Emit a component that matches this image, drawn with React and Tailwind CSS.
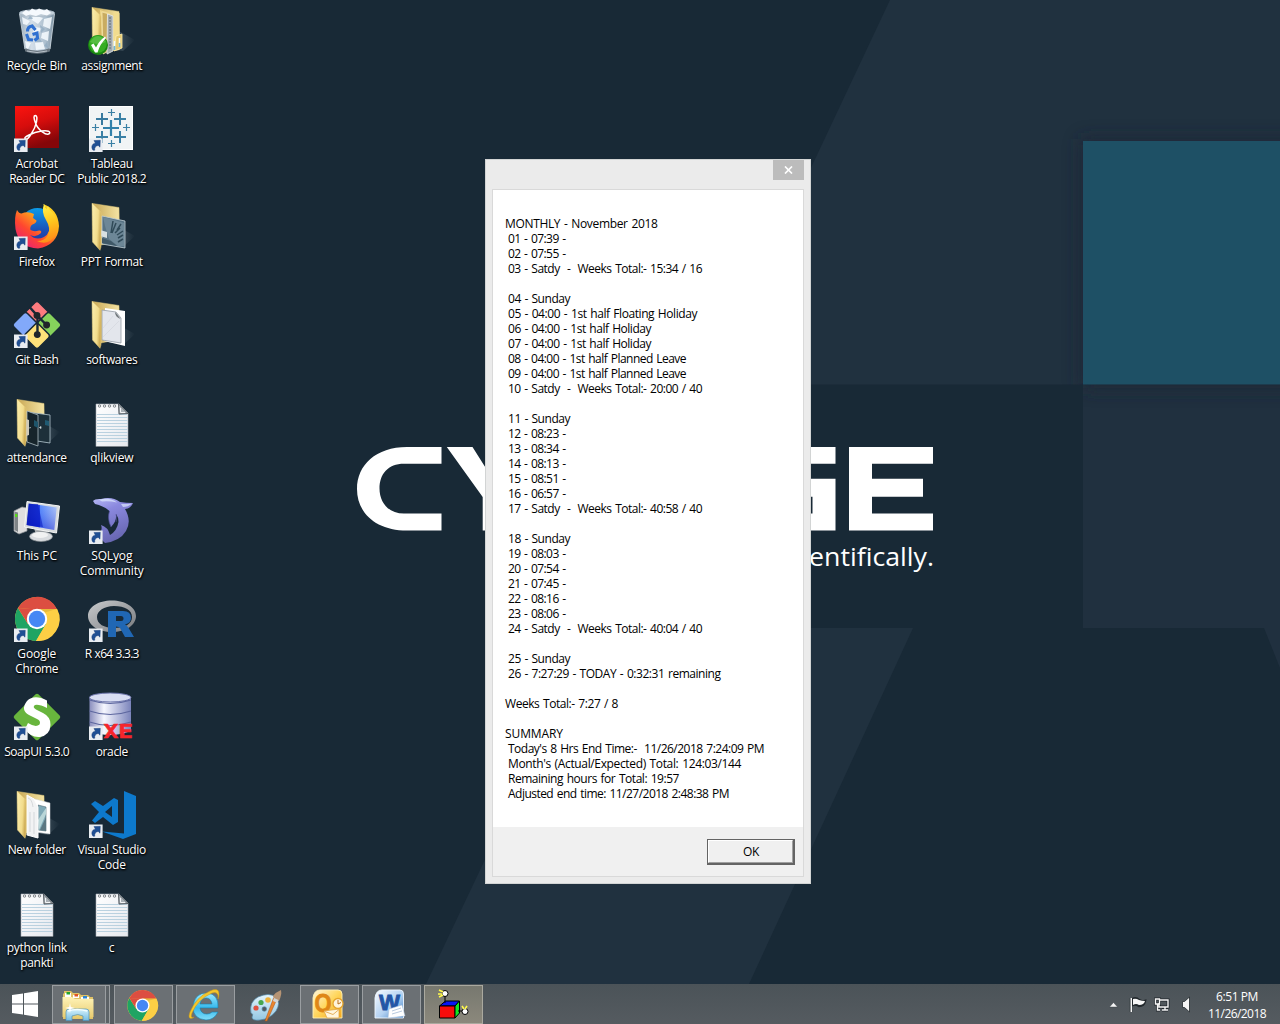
import React, { useLayoutEffect, useRef, useState } from "react";

/* Text whose letter spacing is tuned so that it spans a given width. */
function Fit({ w, children, className = "" }) {
  const ref = useRef(null);
  const [spacing, setSpacing] = useState(0);
  useLayoutEffect(() => {
    const el = ref.current;
    const natural = el.getBoundingClientRect().width;
    setSpacing((w - natural) / children.length);
  }, [w, children]);
  return (
    <span ref={ref} className={"inline-block whitespace-pre " + className} style={{ letterSpacing: spacing + "px" }}>
      {children}
    </span>
  );
}

function Wallpaper() {
  return (
    <svg className="absolute inset-0" width="1280" height="1024" viewBox="0 0 1280 1024">
      <defs>
        <filter id="soft" x="-30%" y="-30%" width="160%" height="160%">
          <feGaussianBlur stdDeviation="9" />
        </filter>
        <clipPath id="upper"><rect x="0" y="0" width="1280" height="385" /></clipPath>
        <clipPath id="lower"><rect x="1083" y="384" width="197" height="60" /></clipPath>
      </defs>
      <rect width="1280" height="1024" fill="#182936" />
      <path d="M890 0H1280V384.5H709Z" fill="#20313f" />
      <path d="M595 628H913L749 984H426Z" fill="#20313f" />
      <path d="M1083 384H1280V668L1264 628H1083Z" fill="#20303f" />
      <g clipPath="url(#upper)"><rect x="1081" y="139" width="230" height="250" fill="#1c2436" opacity=".7" filter="url(#soft)" /></g>
      <g clipPath="url(#lower)"><rect x="1083" y="150" width="220" height="238" fill="#1c2535" opacity=".8" filter="url(#soft)" /></g>
      <rect x="1083" y="141" width="197" height="243.500" fill="#1e5065" />
      <g fill="#fff">
        <path d="M441.500 447H407C376 447 357 465 357 489C357 513 376 530.600 407 530.600H441.500V513.600H404C388 513.600 379.500 502 379.500 488.500C379.500 474 388 463.700 404 463.700H441.500Z" />
        <path d="M446.800 447H472.500L494 481L515 447H541L506 497V530.600H482.700V497Z" />
        <path d="M790 447H835.500V463.700H790Z M790 478.700H835.500V530.600H790V513.600H812.500V496.700H790Z" />
        <path d="M849 447H933V463.700H872V478.700H923V496.700H872V513.600H933V530.600H849Z" />
      </g>
      <text x="809" y="566" textLength="125" lengthAdjust="spacingAndGlyphs" fill="#fff" fontSize="25" fontFamily="Open Sans, sans-serif">entifically.</text>
    </svg>
  );
}

function Shortcut() {
  return (
    <g>
      <rect x="14" y="40.500" width="13.600" height="13.500" fill="#e9edf2" />
      <path d="M18 52.200C15.800 49.500 16.800 45.600 20.400 44.900L18.900 42.600L25.300 42.300L25 49.200L23.200 47.400C20.800 48 19.200 49.500 19.800 52.200Z" fill="#1f4f94" stroke="#173b74" strokeWidth=".4" />
    </g>
  );
}

function RecycleIcon() {
  return (
    <g>
      <defs>
        <linearGradient id="bin" x1="0" x2="1"><stop stopColor="#a3b5c4" /><stop offset=".35" stopColor="#dde8f2" /><stop offset=".75" stopColor="#b3c6d6" /><stop offset="1" stopColor="#7f95a6" /></linearGradient>
      </defs>
      <path d="M19.500 13L25 50Q37 56 50 50L54.500 13Z" fill="url(#bin)" opacity=".95" />
      <path d="M22 17L30 21L27 25L23 24ZM33 15L43 18L38 24L32 20ZM44 19L52 17L50 29L43 26ZM34 27L42 28L38 34L33 32ZM42 33L49 31L48 41L41 38ZM25 41L31 43L28 49L26 48ZM35 43L43 42L45 49L36 50Z" fill="#f7fbff" opacity=".85" />
      <path d="M28 26L33 24L35 29ZM40 25L45 29L41 33ZM38 36L42 42L36 42ZM47 42L44 46L48 48ZM30 15L33 19L28 19Z" fill="#8ea9c0" opacity=".7" />
      <ellipse cx="37" cy="13" rx="17.700" ry="3.300" fill="#c3d0db" stroke="#aab9c5" strokeWidth=".9" />
      <path d="M22 13L26 10L29 11.500L32 8.500L36 10.500L39 8.500L44 10.500L47 9L51 13L47 15.500L41 14L36 16L30 14.500L26 16Z" fill="#f5f9fd" />
      <g fill="none" stroke="#2f70d1" strokeWidth="3.100">
        <path d="M27.500 31.500Q27.500 26.500 32 26L35.500 30" />
        <path d="M26.500 34L28.500 39.500L33 40" />
        <path d="M32.500 34.500L37 33L37.500 38L34.500 40.500" />
      </g>
      <path d="M24.600 48Q37 53.500 50.300 48L49.800 51.500Q37 56 25.200 51.500Z" fill="#68747e" />
      <path d="M27 51Q37 54 47 51" stroke="#b8c2ca" fill="none" />
      <path d="M19.500 14L24.900 49M54.500 14L50 49" stroke="#d5dfe7" strokeWidth=".8" fill="none" />
    </g>
  );
}

/* An open folder; children draw what sticks out of it. */
function Folder({ children }) {
  return (
    <g>
      <defs>
        <linearGradient id="fback" x1="0" x2="1"><stop stopColor="#c9a855" /><stop offset="1" stopColor="#f4e4a4" /></linearGradient>
        <linearGradient id="ffront" x1="0" x2="1" y2=".3"><stop stopColor="#fbeeae" /><stop offset=".7" stopColor="#f2dc8c" /><stop offset="1" stopColor="#cfae58" /></linearGradient>
        <linearGradient id="fshade" x1="0" x2="1"><stop stopColor="#8fa1ab" stopOpacity=".6" /><stop offset="1" stopColor="#8fa1ab" stopOpacity="0" /></linearGradient>
      </defs>
      <path d="M42 30L60 40L48 51L28 47Z" fill="url(#fshade)" />
      <path d="M17.500 7.500L44 11.500L44.500 45L26 49Z" fill="url(#fback)" stroke="#dfc678" strokeWidth=".5" />
      {children}
      <path d="M17 7.200L25 15Q26 16 26 18V51L25 54.300L17.500 46Z" fill="url(#ffront)" stroke="#e6cd7d" strokeWidth=".5" />
    </g>
  );
}

function AssignmentIcon() {
  return (
    <g>
      <Folder>
        <path d="M25 10L35 13V50L28 54Z" fill="#eed78b" />
        <path d="M27 12L34 14V51L28 54Z" fill="#c9ac60" stroke="#f7e7ae" strokeWidth=".7" />
        <path d="M32.500 14L38 16V51L32 54Z" fill="#a4abb0" stroke="#e9edef" strokeWidth=".8" />
        <path d="M35 17V50" stroke="#5d6b74" strokeDasharray="2 1" />
        <path d="M38.500 12L44.500 13V50L38.500 51Z" fill="#f2dc8e" />
        <path d="M41 36L47 34V48L39 51Z" fill="#e5c96f" stroke="#ffefad" strokeWidth=".8" />
        <path d="M39.500 41V50M44.500 38V47" stroke="#f1fbff" strokeWidth="1.600" />
        <path d="M39.500 46V50M44.500 43V47" stroke="#71b8d8" strokeWidth="1.600" />
      </Folder>
      <circle cx="23" cy="45" r="10" fill="#19870f" />
      <circle cx="23" cy="44" r="8.800" fill="#35ad23" />
      <path d="M15 42Q23 30 31 42Q23 46 15 42Z" fill="#78ce61" opacity=".5" />
      <path d="M16 45L18.500 43.500L21 47.500Q24 41 30 36.500L31 38Q25 44 22.500 52.500L20 52.500Z" fill="#fff" />
    </g>
  );
}

function AcrobatIcon() {
  return (
    <g>
      <defs><linearGradient id="acro" x1="0" y1="0" x2=".35" y2="1"><stop stopColor="#fc1410" /><stop offset=".5" stopColor="#d60d0c" /><stop offset="1" stopColor="#850609" /></linearGradient></defs>
      <rect x="15" y="8" width="44" height="42" fill="url(#acro)" />
      <path d="M25.500 41C22 39.500 33 34.500 41.500 33C48 31.800 51 34 49.300 35.700C46.500 38 38 32.300 35.500 25C33.500 19.500 33.500 17.500 35.500 17.500C38.500 18 36.500 28 31.500 35.500C29 39.500 27 42 25.500 41Z" fill="none" stroke="#fff" strokeWidth="1.500" />
      <Shortcut />
    </g>
  );
}

function Plus({ x, y, r, w, c = "#3a80a5" }) {
  return <path d={"M" + (x - r) + " " + y + "H" + (x + r) + "M" + x + " " + (y - r) + "V" + (y + r)} stroke={c} strokeWidth={w} />;
}

function TableauIcon() {
  return (
    <g>
      <rect x="14" y="8" width="44" height="44" fill="#f1f4f5" />
      <rect x="14.500" y="8.500" width="43" height="43" fill="none" stroke="#fff" />
      <Plus x={36} y={30} r={8} w={2.2} c="#3281aa" />
      <Plus x={27} y={21} r={6} w={2} c="#397a9f" />
      <Plus x={45} y={21} r={6} w={2} />
      <Plus x={27} y={39} r={6} w={2} />
      <Plus x={45} y={39} r={6} w={2} />
      <Plus x={36.500} y={14.500} r={3.500} w={1.200} />
      <Plus x={36.500} y={45.500} r={3.500} w={1.200} />
      <Plus x={20.500} y={29.500} r={3.500} w={1.200} />
      <Plus x={51.500} y={29.500} r={3.500} w={1.200} />
      <Shortcut />
    </g>
  );
}

function FirefoxIcon() {
  return (
    <g>
      <defs>
        <linearGradient id="fx1" x1=".9" y1="0" x2=".1" y2="1"><stop stopColor="#ffe226" /><stop offset=".35" stopColor="#ffab18" /><stop offset=".65" stopColor="#ff472f" /><stop offset="1" stopColor="#e31587" /></linearGradient>
        <linearGradient id="fx2" x1=".5" y1="0" x2=".5" y2="1"><stop stopColor="#0c9be8" /><stop offset=".7" stopColor="#1c4bb4" /><stop offset="1" stopColor="#253b9e" /></linearGradient>
        <linearGradient id="fx3" x1=".4" y1="0" x2=".6" y2="1"><stop stopColor="#fff44e" /><stop offset=".5" stopColor="#ffc51d" /><stop offset="1" stopColor="#ff8a17" /></linearGradient>
      </defs>
      <circle cx="37.500" cy="29" r="17" fill="url(#fx2)" />
      <path d="M17 14Q19 17.500 21.500 17.500Q28 15 34 18L33 22L36.500 24.500Q36.500 27 32.500 28.500Q29.500 30.500 30.500 34Q34 36 39 34.500Q42 34 41 37Q36 42 30 39Q36 45 44 41Q51 37 50 26Q49 15 43 8Q58 13 59 30Q58 49 38 52.500Q19 52 15.500 33Q14 21 17 14Z" fill="url(#fx1)" />
      <path d="M44 8Q41 16 46 24Q51 32 48 39Q45 45 37 45Q48 50 55 40Q61 28 53 17Q49 14 48 10L46.500 13Z" fill="url(#fx3)" />
      <Shortcut />
    </g>
  );
}

function PptFolder() {
  return (
    <Folder>
      <path d="M27 20L50 25V52L27 48Z" fill="#587384" stroke="#c3d0d7" strokeWidth=".8" />
      <path d="M28 21L39 24L49 27V50L43 50L34 43L30 30Z" fill="#6d8797" />
      <path d="M38 25L36 37M41 27L37 37M45 32L40 37M46 28L42 34M42 39L48 35M43 42L48 39M43 46L48 43" stroke="#304a58" strokeWidth="1.500" fill="none" />
      <path d="M27 42L36 45L42 50L27 47Z" fill="#3f5867" />
      <path d="M25 34L32 36V42L25 40Z" fill="#d8e0e2" />
    </Folder>
  );
}

function SoftwareFolder() {
  return (
    <Folder>
      <path d="M30 14L50 17V52L29 47Z" fill="#fff" />
      <path d="M27 16L41 18L46 24V49L27 46Z" fill="#e3e6ec" stroke="#949ca4" strokeWidth=".8" />
      <path d="M40 18Q40 23 45.500 25L42 20Z" fill="#71777b" />
      <path d="M28 43L44 27M28 34L38 22" stroke="#d5d8df" strokeWidth=".8" />
    </Folder>
  );
}

function GitIcon() {
  return (
    <g transform="translate(37 31) scale(.96) translate(-37 -31)">
      <g stroke="#182936" strokeWidth="1.600">
        <rect x="27" y="9.500" width="20" height="20" rx="3" transform="rotate(45 37 19.500)" fill="#fc7b7f" />
        <rect x="15" y="21" width="20" height="20" rx="3" transform="rotate(45 25 31)" fill="#82a9fa" />
        <rect x="39" y="21" width="20" height="20" rx="3" transform="rotate(45 49 31)" fill="#86d25c" />
        <rect x="27" y="32.500" width="20" height="20" rx="3" transform="rotate(45 37 42.500)" fill="#ffe27a" />
      </g>
      <path d="M37.500 21V40M38 22L47 31M29 12L37 21" stroke="#182936" strokeWidth="2.500" fill="none" />
      <circle cx="37" cy="21" r="3.600" fill="#20252a" />
      <circle cx="47" cy="31" r="3.600" fill="#20252a" />
      <circle cx="37.300" cy="41" r="3.600" fill="#20252a" />
    </g>
  );
}

function AttendanceFolder() {
  return (
    <Folder>
      <path d="M27 20L50 23V51L37 49Z" fill="#1d303a" stroke="#b4c7cf" strokeWidth=".8" />
      <path d="M45 28L49 29V34L45 33Z" fill="#205b73" />
      <path d="M27 19L38 23V54L27 50Z" fill="#16242b" stroke="#acbcc3" strokeWidth=".8" />
      <path d="M34 28L38 30V36L34 34Z" fill="#1e556b" />
      <path d="M26 27L29 28V43L26 44Z" fill="#cfcaba" />
      <path d="M29 36L31 35.500M39.500 35.500L41 34.500V36.500Z" stroke="#c3ced2" strokeWidth=".8" fill="#fff" />
    </Folder>
  );
}

function NotepadIcon() {
  return (
    <g>
      <defs><linearGradient id="note" x1="0" y1="0" x2="1" y2="1"><stop stopColor="#fff" /><stop offset="1" stopColor="#e5e8ee" /></linearGradient></defs>
      <path d="M21.500 12.500H44L53.500 22V55.500H21.500Z" fill="#101c26" opacity=".6" />
      <path d="M21 12H44L53 21V54.500H21Z" fill="url(#note)" stroke="#a5adb5" strokeWidth=".6" />
      {[22.500, 25.500, 28.500, 31.500, 34.500, 37.500, 40.500, 43.500, 46.500, 49.500].map((y) => (
        <path key={y} d={"M22 " + y + "H52.500"} stroke="#b3cddc" strokeWidth=".9" />
      ))}
      <path d="M43.500 12L53 21.500L44 22Z" fill="#a9b0b6" stroke="#474e55" strokeWidth=".9" />
      <path d="M45.500 16V20.500H50" stroke="#f2f4f6" fill="none" />
      {[24.500, 29.500, 34.500, 39.500].map((x) => (
        <circle key={x} cx={x} cy="14" r="1.250" fill="#eee" stroke="#686e75" strokeWidth=".8" />
      ))}
      <path d="M21 54.500H53" stroke="#7d848b" />
    </g>
  );
}

function PcIcon() {
  return (
    <g>
      <defs>
        <linearGradient id="scr" x1="0" x2="1"><stop stopColor="#0715b1" /><stop offset=".43" stopColor="#1533e2" /><stop offset=".46" stopColor="#5d8efd" /><stop offset="1" stopColor="#c5d5f5" /></linearGradient>
        <linearGradient id="scrv" x1="0" x2="0" y2="1"><stop stopColor="#6495ff" stopOpacity=".2" /><stop offset="1" stopColor="#0610c7" stopOpacity=".45" /></linearGradient>
      </defs>
      <path d="M14 21L22 17L27 18V41L19 44L14 41Z" fill="#dedede" stroke="#8f9498" strokeWidth=".7" />
      <path d="M14.500 21.500L18 22.500V42L14.500 40Z" fill="#7f8487" />
      <path d="M16.200 24V27" stroke="#54de14" strokeWidth="2.200" />
      <path d="M34 38L48 39L47 45H36Z" fill="#aeb2b4" />
      <ellipse cx="41" cy="46.500" rx="11.500" ry="5" fill="#d9dcdf" stroke="#878d91" strokeWidth=".7" />
      <ellipse cx="40" cy="45" rx="8" ry="3" fill="#f1f2f2" />
      <path d="M27 11.500L59.500 16L56.500 43L24.500 37Z" fill="#d7dbdd" stroke="#f4f5f5" />
      <path d="M28.700 13.500L56.700 17.500L54.300 40L26.600 35Z" fill="url(#scr)" />
      <path d="M28.700 13.500L56.700 17.500L54.300 40L26.600 35Z" fill="url(#scrv)" />
      <path d="M29 14H38L43 37L27 35Z" fill="#0717bd" opacity=".55" />
    </g>
  );
}

function DolphinIcon() {
  return (
    <g>
      <defs><linearGradient id="dol" x1="0" y1="0" x2=".4" y2="1"><stop stopColor="#b6b9f4" /><stop offset=".35" stopColor="#8b89df" /><stop offset="1" stopColor="#6867b2" /></linearGradient></defs>
      <path d="M18 11Q20 8.500 26 9Q37 6 45 12Q51 13 58 13Q56 18.500 50 19Q57 31 51 41Q45 51 30 53L24 47Q28 39 26 35Q33 37 35 45Q42 41 43.500 32Q43.500 27 41 24Q42 31 36 37Q32 29 34.500 21Q29 16 20 14Z" fill="url(#dol)" />
      <path d="M24 9.800Q35 7 42 12.500Q33 10.500 27 11.500ZM46 14Q51 14 57 13.500Q53 17 48 17Z" fill="#e2eeff" opacity=".65" />
      <path d="M34.500 21Q32 29 36 37M41 24Q42.500 28 41 32" stroke="#4f4f96" strokeWidth=".7" fill="none" />
      <Shortcut />
    </g>
  );
}

function ChromeArt({ cx, cy, s }) {
  return (
    <g transform={"translate(" + cx + " " + cy + ") scale(" + s + ")"}>
      <circle r="22" fill="#fdcf45" />
      <path d="M-19.050 -11A22 22 0 0 1 20.200 -9.500H0Z" fill="#dc4e41" />
      <path d="M-19.050 -11A22 22 0 0 0 -1 22L9 5L-9 5Z" fill="#1fa463" />
      <path d="M0 -10H20.200A22 22 0 0 1 -1 22L9 5Z" fill="#fdcf45" />
      <path d="M-19.050 -11L0 -10L-9 5Z" fill="#dc4e41" />
      <path d="M0 -10H19.500L6 -6Z" fill="#be932c" opacity=".35" />
      <circle r="10.200" fill="#fff" />
      <circle r="8.200" fill="#4687f4" />
    </g>
  );
}

function RIcon() {
  return (
    <g>
      <defs><linearGradient id="rring" x1="0" y1="0" x2="1" y2="1"><stop stopColor="#c9cbcd" /><stop offset="1" stopColor="#77797d" /></linearGradient></defs>
      <path fillRule="evenodd" d="M37 12.500C50 12.500 61 19 61 28C61 37 51 44 37 44C23 44 13 37 13 28C13 19 23 12.500 37 12.500ZM39 18C29 18 22 23 22 29C22 36 29 40 39 40C50 40 57 36 57 29C57 22 50 18 39 18Z" fill="url(#rring)" />
      <path fillRule="evenodd" d="M33 23H48Q56 23 56 30Q56 35 50 36.500Q52 37.500 53 39L59 49H50L45 40Q44 38.500 41 38.500V49H33ZM41 28V33H46Q48.500 33 48.500 30.500Q48.500 28 46 28Z" fill="#2067b4" />
      <Shortcut />
    </g>
  );
}

function SoapIcon() {
  return (
    <g>
      <rect x="20" y="14" width="34" height="34" rx="2" transform="rotate(45 37 31)" fill="#68b53d" />
      <path d="M47 14.500Q34 8 27 15Q20 24 29 29L38 33.500Q41 35.500 39.500 38.500Q36 42 28 37L25 43Q31 52 40 51Q50 49 50.500 39Q51 31 43 27L36 23.500Q32 21 35 19Q39 18 47 22Z" fill="#fff" />
      <Shortcut />
    </g>
  );
}

function OracleIcon() {
  return (
    <g>
      <defs><linearGradient id="db" x1="0" x2="1"><stop stopColor="#8a8ebd" /><stop offset=".35" stopColor="#f6f7ff" /><stop offset="1" stopColor="#7b84bb" /></linearGradient></defs>
      <path d="M14.500 11V45Q35 53 56 45V11Z" fill="url(#db)" />
      <ellipse cx="35.200" cy="11.500" rx="20.700" ry="4.500" fill="#d9def3" stroke="#6b73aa" />
      <path d="M14.500 14Q35 21 56 14M14.500 25Q35 32 56 25M14.500 36Q35 43 56 36" fill="none" stroke="#5d679f" strokeWidth="1.200" />
      <text x="28.500" y="52" fontFamily="DejaVu Sans Mono" fontSize="20" fontWeight="bold" fill="#f6252b" stroke="#f6252b" strokeWidth=".5" textLength="29.500" lengthAdjust="spacingAndGlyphs">XE</text>
      <Shortcut />
    </g>
  );
}

function NewFolder() {
  return (
    <Folder>
      <path d="M31 14L50 19V50L36 48Z" fill="#fff" stroke="#d6dadc" strokeWidth=".5" />
      <path d="M38 21L46 23V47L38 46Z" fill="#7fa9b6" stroke="#536c76" strokeWidth=".6" />
      <path d="M38 36L46 24V30L39 46Z" fill="#b9d6d8" />
      <path d="M40 46L46 33V47Z" fill="#5c7781" />
      <path d="M27 11L34 15L38 23V54L27 51Z" fill="#f2f3f4" stroke="#fff" />
      <path d="M28 14Q32 15 33 23M30 28V48M34 28V50" stroke="#c9cdd0" strokeWidth=".7" fill="none" />
    </Folder>
  );
}

function CodeIcon() {
  return (
    <g fill="#0d79cc">
      <path d="M49 7L61 12V50L48 55L27 47.500L49 49.500Z" />
      <path fillRule="evenodd" d="M39 14L43 16V38L38 41L28 33L20 39L17 36.500L24 28L16 20L20 17L28 22ZM37 22L30 28L37 33Z" />
      <Shortcut />
    </g>
  );
}

const ICONS = [
  [RecycleIcon, [["Recycle Bin", 60]]],
  [AssignmentIcon, [["assignment", 61]]],
  [AcrobatIcon, [["Acrobat", 42], ["Reader DC", 55]]],
  [TableauIcon, [["Tableau", 42], ["Public 2018.2", 69]]],
  [FirefoxIcon, [["Firefox", 36]]],
  [PptFolder, [["PPT Format", 62]]],
  [() => <g><GitIcon /><Shortcut /></g>, [["Git Bash", 43]]],
  [SoftwareFolder, [["softwares", 51]]],
  [AttendanceFolder, [["attendance", 60]]],
  [NotepadIcon, [["qlikview", 43]]],
  [PcIcon, [["This PC", 40]]],
  [DolphinIcon, [["SQLyog", 41], ["Community", 64]]],
  [() => <g><ChromeArt cx={37} cy={31} s={1} /><Shortcut /></g>, [["Google", 39], ["Chrome", 43]]],
  [RIcon, [["R x64 3.3.3", 54]]],
  [SoapIcon, [["SoapUI 5.3.0", 65]]],
  [OracleIcon, [["oracle", 32]]],
  [NewFolder, [["New folder", 58]]],
  [CodeIcon, [["Visual Studio", 68], ["Code", 28]]],
  [NotepadIcon, [["python link", 60], ["pankti", 33]]],
  [NotepadIcon, [["c", 6]]],
];

function Desktop() {
  return (
    <div className="grid w-[150px] auto-rows-[98px] grid-cols-[75px_75px]">
      {ICONS.map(([Icon, label], i) => (
        <div key={i} className="flex flex-col items-center">
          <svg className="h-[58px] w-[75px] shrink-0" viewBox="0 0 75 58"><Icon /></svg>
          <div className="flex w-full flex-col items-center pr-[1.5px] text-xs leading-[15px] text-white [text-shadow:1px_1px_2px_#000,0_1px_2px_#000]">
            {label.map(([t, w]) => <Fit key={t} w={w} className="[word-spacing:0.8px]">{t}</Fit>)}
          </div>
        </div>
      ))}
    </div>
  );
}

const LINES = [
  ["MONTHLY - November 2018", 152.5],
  ["01 - 07:39 -", 57.5, 1],
  ["02 - 07:55 -", 57.5, 1],
  ["03 - Satdy  -  Weeks Total:- 15:34 / 16", 194, 1],
  null,
  ["04 - Sunday", 62, 1],
  ["05 - 04:00 - 1st half Floating Holiday", 189, 1],
  ["06 - 04:00 - 1st half Holiday", 143, 1],
  ["07 - 04:00 - 1st half Holiday", 143, 1],
  ["08 - 04:00 - 1st half Planned Leave", 178, 1],
  ["09 - 04:00 - 1st half Planned Leave", 178, 1],
  ["10 - Satdy  -  Weeks Total:- 20:00 / 40", 194, 1],
  null,
  ["11 - Sunday", 62, 1],
  ["12 - 08:23 -", 57.5, 1],
  ["13 - 08:34 -", 57.5, 1],
  ["14 - 08:13 -", 57.5, 1],
  ["15 - 08:51 -", 57.5, 1],
  ["16 - 06:57 -", 57.5, 1],
  ["17 - Satdy  -  Weeks Total:- 40:58 / 40", 194, 1],
  null,
  ["18 - Sunday", 62, 1],
  ["19 - 08:03 -", 57.5, 1],
  ["20 - 07:54 -", 57.5, 1],
  ["21 - 07:45 -", 57.5, 1],
  ["22 - 08:16 -", 57.5, 1],
  ["23 - 08:06 -", 57.5, 1],
  ["24 - Satdy  -  Weeks Total:- 40:04 / 40", 194, 1],
  null,
  ["25 - Sunday", 62, 1],
  ["26 - 7:27:29 - TODAY - 0:32:31 remaining", 212.5, 1],
  null,
  ["Weeks Total:- 7:27 / 8", 113],
  null,
  ["SUMMARY", 58],
  ["Today's 8 Hrs End Time:-  11/26/2018 7:24:09 PM", 256, 1],
  ["Month's (Actual/Expected) Total: 124:03/144", 233, 1],
  ["Remaining hours for Total: 19:57", 171, 1],
  ["Adjusted end time: 11/27/2018 2:48:38 PM", 221, 1],
];

function Dialog() {
  return (
    <div className="absolute left-[485px] top-[159px] flex h-[725px] w-[326px] flex-col border border-[#d2d4d4] bg-[#ebebeb] px-[6px] pb-[6px] text-xs text-black">
      <div className="flex h-[29px] shrink-0 justify-end">
        <button className="flex h-5 w-[31px] items-center justify-center bg-[#bcbcbc]">
          <svg width="9" height="8" viewBox="0 0 9 8"><path d="M1 .5L8 7.500M8 .5L1 7.500" stroke="#fff" strokeWidth="1.700" /></svg>
        </button>
      </div>
      <div className="flex min-h-0 flex-1 flex-col border border-[#d9d9d9] bg-white">
        <div className="flex-1 pl-3 pt-[26px]">
          {LINES.map((l, i) => (
            <div key={i} className={l && l[2] ? "flex h-[15px] pl-[3px] leading-[15px]" : "flex h-[15px] leading-[15px]"}>
              {l && <Fit w={l[1]} className="[word-spacing:1px]">{l[0]}</Fit>}
            </div>
          ))}
        </div>
        <div className="flex h-[49px] shrink-0 justify-end bg-[#f0f0f0] pr-2 pt-3">
          <button className="h-[26px] w-[88px] border border-b-2 border-r-2 border-[#646464] bg-[#f0f0f0]">
            <span className="flex h-full w-full items-center justify-center border border-b-[#a0a0a0] border-l-white border-r-[#a0a0a0] border-t-white pl-px">
              <Fit w={16}>OK</Fit>
            </span>
          </button>
        </div>
      </div>
    </div>
  );
}

function TaskButton({ children, active, open = true }) {
  const base = "flex h-[39px] w-[59px] items-center justify-center border ";
  const look = !open ? "border-transparent" : active ? "border-[#aaa99f] bg-[linear-gradient(#77786f,#8b887c)]" : "border-[#9a9ea1] bg-[#6b7074]";
  return <div className={base + look}><svg width="48" height="36" viewBox="0 0 48 36">{children}</svg></div>;
}

function Taskbar() {
  return (
    <div className="relative flex h-10 w-full shrink-0 items-start bg-[linear-gradient(#4b5358,#555b60)] pt-px">
      <div className="flex h-[39px] w-[52px] items-center pl-3">
        <svg width="27" height="27" viewBox="0 0 27 27" fill="#fff"><path d="M0 4L11 2.400V12.500H0ZM12 2.200L26 0V12.500H12ZM0 13.500H11V23.600L0 22ZM12 13.500H26V26L12 23.800Z" /></svg>
      </div>
      <div className="flex w-[61.5px]">
        <div className="flex h-[39px] w-[54px] items-center justify-center border border-[#9a9ea1] bg-[#6b7074]">
          <svg width="36" height="34" viewBox="0 0 36 34">
            <defs>
              <linearGradient id="exf" x1="0" y1="0" x2="0" y2="1"><stop stopColor="#fff3b8" /><stop offset="1" stopColor="#e7ca6c" /></linearGradient>
              <linearGradient id="exb" x1="0" y1="0" x2="0" y2="1"><stop stopColor="#d5f2fc" /><stop offset="1" stopColor="#76bde1" /></linearGradient>
            </defs>
            <path d="M3 6V3H10L12 5H18L20 7H27L29 9H32V31H2V5Z" fill="#dfc267" />
            <path d="M4 5H10V9H4ZM12 7H18V10H12ZM20 9H28V12H20Z" fill="#fff" />
            <path d="M5.500 4H9V6.500H5.500Z" fill="#23a42a" /><path d="M13.500 6H17V8.500H13.500Z" fill="#df5424" /><path d="M22 8H26V10.500H22Z" fill="#2f85cf" />
            <path d="M1.500 9H11L14 11H32.500V29Q18 32 1.500 29Z" fill="url(#exf)" />
            <path d="M5 32.500V24Q5 21 8 21H25Q28 21 28 24V32.500H22V28Q17 25 11 28V32.500Z" fill="url(#exb)" stroke="#4e93ba" strokeWidth=".7" />
            <path d="M7 23Q16 20 26 23" stroke="#f4feff" strokeWidth="1.500" fill="none" />
            <path d="M9 15L9.800 19L14 20L9.800 21L9 25L8.200 21L4 20L8.200 19Z" fill="#fff" />
          </svg>
        </div>
        <div className="h-[39px] w-1 border border-l-0 border-[#9a9ea1] bg-[#5c6266]" />
      </div>
      <div className="flex gap-[3px]">
        <TaskButton><ChromeArt cx={23.5} cy={18.500} s={0.69} /></TaskButton>
        <TaskButton>
          <defs><linearGradient id="ie" x1="0" y1="0" x2="0" y2="1"><stop stopColor="#9ce9ff" /><stop offset=".55" stopColor="#35b8ec" /><stop offset="1" stopColor="#81def9" /></linearGradient></defs>
          <path fillRule="evenodd" d="M37 21H19Q20 27 26 27Q29 27 31 25H37Q33 33 25 33Q12 32 12 20Q13 6 26 6Q38 7 37 21ZM19 17H31Q30 11 25 11Q20 11 19 17Z" fill="url(#ie)" stroke="#187dab" strokeWidth=".6" />
          <path d="M12 31Q6 33 9 25Q15 10 29 4Q38 0 38 7Q38 9 37 12Q38 4 31 6Q17 12 11 26Q9 32 13 30Z" fill="#f5c62c" stroke="#c99613" strokeWidth=".5" />
        </TaskButton>
        <TaskButton open={false}>
          <defs><linearGradient id="pal" x1="0" y1="0" x2="0" y2="1"><stop stopColor="#e3f4fc" /><stop offset="1" stopColor="#93c7e3" /></linearGradient></defs>
          <path fillRule="evenodd" d="M8 26Q6 15 15 10Q26 5 33 10Q38 16 33 24Q27 32 17 33Q9 34 9 30Q11 27 8 26ZM19 22A2.300 2.300 0 1 0 23.600 22A2.300 2.300 0 1 0 19 22" fill="url(#pal)" stroke="#548baa" strokeWidth=".7" />
          <circle cx="13" cy="21" r="2.600" fill="#de5140" /><circle cx="18" cy="15.500" r="2.600" fill="#46a64e" /><circle cx="25" cy="13" r="2.800" fill="#eeb23b" />
          <path d="M34 12L24 34L22 34L30.500 11Z" fill="#e9852f" stroke="#a75318" strokeWidth=".5" />
          <path d="M30 9Q33 5 38 3Q39 8 36 14L31 12Z" fill="#b69474" />
          <path d="M31 11L35.500 13L34.500 16L30 14Z" fill="#d1d4d4" />
        </TaskButton>
        <TaskButton>
          <defs><linearGradient id="out" x1="0" y1="0" x2="1" y2="1"><stop stopColor="#fff6dc" /><stop offset=".5" stopColor="#ffd65c" /><stop offset="1" stopColor="#f2a51a" /></linearGradient></defs>
          <path d="M8 11Q9 3 15 3H33Q37 3 37 7V31H8Z" fill="url(#out)" stroke="#fff0b5" strokeWidth=".9" />
          <text x="9.500" y="24.500" fontFamily="Liberation Sans" fontSize="26" fontWeight="bold" fill="#df8716" stroke="#df8716" strokeWidth=".8" textLength="17" lengthAdjust="spacingAndGlyphs">O</text>
          <path d="M19 24L34 22V31H22Z" fill="#fff6dd" stroke="#dca13d" strokeWidth=".7" /><path d="M20 24.500L28 27.500L34 22.500" fill="none" stroke="#e5b05c" />
          <circle cx="33" cy="16.500" r="5" fill="#fff4db" stroke="#e5a42b" strokeWidth="1.300" /><path d="M33 13V17L36 15.500" fill="none" stroke="#b97122" />
        </TaskButton>
        <TaskButton>
          <defs><linearGradient id="wrd" x1="0" y1="0" x2="1" y2="1"><stop stopColor="#f8fcff" /><stop offset=".55" stopColor="#b4d2f2" /><stop offset="1" stopColor="#3579c2" /></linearGradient></defs>
          <path d="M8 11Q9 3 15 3H33Q36.500 3 36.500 7V31H8Z" fill="url(#wrd)" stroke="#eff7ff" strokeWidth=".9" />
          <text x="12" y="23" fontFamily="Liberation Sans" fontSize="22" fontWeight="bold" fill="#2355a5" stroke="#2355a5" strokeWidth=".9" textLength="21" lengthAdjust="spacingAndGlyphs">W</text>
          <path d="M22 22L35 18L38 29L21 31Z" fill="#fff" stroke="#a6bfdb" strokeWidth=".5" /><path d="M25 24L34 21M25 27L35 24" stroke="#b8cadf" />
        </TaskButton>
        <TaskButton active>
          <path d="M10.500 19L16.500 14H30.500L26 19Z" fill="#0714f6" stroke="#000" />
          <path d="M10.500 19H26V31H10.500Z" fill="#f90c0b" stroke="#000" />
          <path d="M26 19L30.500 14V26L26 31Z" fill="#12e622" stroke="#000" />
          <path d="M16 16V8M29 24H34" stroke="#000" />
          <circle cx="16" cy="6.500" r="3" fill="#fff" stroke="#000" /><circle cx="36" cy="24.500" r="3" fill="#fff" stroke="#000" />
          <path d="M10 3L14 5M9 7H13M10 10L14 8M33 19L35 22M38 19L36 22" stroke="#fff94c" strokeWidth="1.600" />
        </TaskButton>
      </div>
      <div className="ml-auto flex h-[39px] items-center">
        <svg width="90" height="39" viewBox="0 0 90 39" fill="#f5f5f5">
          <path d="M4.500 22L8.500 17.500L12.500 22Z" stroke="#303840" strokeWidth=".4" />
          <path d="M26 13V27M27.500 14Q31 12 34 15Q37 17 40 16Q39 21 34 21Q31 19 27.500 20Z" stroke="#21272b" strokeWidth="2.400" fill="none" />
          <path d="M25.500 13H27V27H25.500ZM28 14Q31 13 34 15Q37 16 40 16Q39 20 34 20Q31 18 28 20Z" />
          <path d="M55 15H63V22H54V18M57 25H63M60 22V25M50.500 14H54.500V19H50.500ZM52.500 19V25H55" fill="none" stroke="#20272c" strokeWidth="3" />
          <path d="M55 15H63V22H54V18M57 25H63M60 22V25M50.500 14H54.500V19H50.500ZM52.500 19V25H55" fill="none" stroke="#f5f5f5" strokeWidth="1.400" />
          <path d="M77.500 16.500H79.500L84.500 12V27L79.500 22.500H77.500Z" stroke="#21272b" strokeWidth=".8" />
        </svg>
        <div className="ml-[13px] mr-[14px] flex w-[58px] flex-col items-center pt-px text-xs leading-[17px] text-white">
          <Fit w={42}>6:51 PM</Fit>
          <Fit w={58}>11/26/2018</Fit>
        </div>
      </div>
    </div>
  );
}

export default function App() {
  return (
    <div className="relative flex h-[1024px] w-[1280px] flex-col overflow-hidden font-['Open_Sans','Noto_Sans',sans-serif]">
      <Wallpaper />
      <div className="relative h-[984px] shrink-0">
        <Desktop />
        <Dialog />
      </div>
      <Taskbar />
    </div>
  );
}
